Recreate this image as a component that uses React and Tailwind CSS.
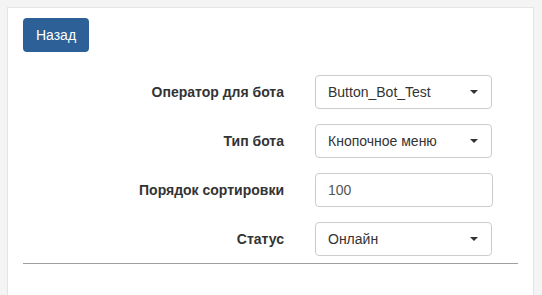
import {useState} from "react";

function Caret() {
    return <svg width="8" height="4" viewBox="0 0 8 4" className="shrink-0">
        <path d="M0 0 L8 0 L4 4 Z" fill="#333"/>
    </svg>
}

function SelectBox({value}) {
    return <div
        className="flex items-center justify-between h-[34px] w-[177px] border border-[#cccccc] rounded-[4px] bg-white pl-[12px] pr-[13px] text-[14px] text-[#333]">
        <span>{value}</span>
        <Caret/>
    </div>
}

function Row({label, children}) {
    return <div className="flex items-center">
        <div className="w-[261px] text-right font-bold text-[14px] text-[#333]">{label}</div>
        <div className="ml-[31px]">{children}</div>
    </div>
}

export default function App() {
    const [sort, setSort] = useState("100");

    return <div className="min-h-screen bg-[#f4f4f4] pt-[7px] pl-[7px]"
                style={{fontFamily: '"Liberation Sans", Arial, sans-serif'}}>
        <div className="w-[527px] min-h-[300px] bg-white border border-[#e4e4e4] px-[15px] pt-[10px]">
            <button className="h-[34px] w-[66px] rounded-[4px] bg-[#2c6096] text-white text-[14px]">
                Назад
            </button>

            <div className="mt-[23px] flex flex-col gap-[15px]">
                <Row label="Оператор для бота">
                    <SelectBox value="Button_Bot_Test"/>
                </Row>
                <Row label="Тип бота">
                    <SelectBox value="Кнопочное меню"/>
                </Row>
                <Row label="Порядок сортировки">
                    <input value={sort} onChange={(e) => setSort(e.target.value)}
                           className="h-[34px] w-[178px] border border-[#cccccc] rounded-[4px] px-[12px] text-[14px] text-[#555] outline-none"/>
                </Row>
                <Row label="Статус">
                    <SelectBox value="Онлайн"/>
                </Row>
            </div>

            <div className="mt-[7px] w-[495px] border-t border-[#a0a0a0]"></div>
        </div>
    </div>
}
